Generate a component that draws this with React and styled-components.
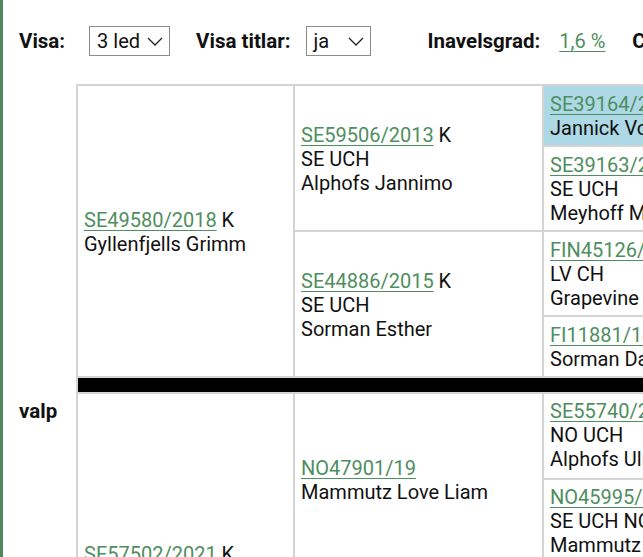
import React from 'react';
import styled, { createGlobalStyle } from 'styled-components';

const GlobalStyle = createGlobalStyle`
  html, body {
    margin: 0;
    padding: 0;
    overflow: hidden;
    background: #fff;
  }
  body {
    font-family: Roboto, 'Liberation Sans', sans-serif;
    color: #111;
  }
`;

const Page = styled.div`
  min-height: 100vh;
  border-left: 3px solid #4f8a5e;
  padding-top: 26px;
  box-sizing: border-box;
  overflow: hidden;
`;

const Toolbar = styled.div`
  display: flex;
  align-items: center;
  height: 30px;
  padding-left: 16px;
  margin-bottom: 28px;
  white-space: nowrap;
  font-size: 20px;

  & > * {
    flex-shrink: 0;
  }
`;

const Label = styled.span`
  font-weight: bold;
  font-size: 20.5px;
  margin-right: ${props => props.$space}px;
`;

const Select = styled.div`
  display: flex;
  align-items: center;
  justify-content: space-between;
  box-sizing: border-box;
  width: ${props => props.$width}px;
  height: 30px;
  padding: 0 6px 0 7px;
  border: 1px solid #8c8c8c;
  margin-right: ${props => props.$space}px;
  font-size: 20px;
`;

const Link = styled.a`
  color: #4e8e60;
  text-decoration: underline;
  text-underline-offset: 3px;
  text-decoration-thickness: 1px;
  margin-right: ${props => props.$space || 0}px;
`;

const Pedigree = styled.table`
  border-collapse: collapse;
  table-layout: fixed;
  width: 860px;
  font-size: 20px;
  line-height: 24px;
`;

const LabelCell = styled.td`
  padding: 0 0 0 16px;
  font-weight: bold;
  font-size: 20.5px;
  vertical-align: middle;
  border-right: 2px solid #d4d4d4;
`;

const Cell = styled.td`
  border: 2px solid #d4d4d4;
  padding: ${props => (props.$tall ? '5px 6px 7px' : '6px 6px 5px')};
  vertical-align: middle;
  white-space: nowrap;
  overflow: hidden;
  background: ${props => (props.$marked ? '#add8e6' : '#fff')};
`;

const Divider = styled.td`
  border: 2px solid #d4d4d4;
  background: #000;
  height: 14px;
  padding: 0;
`;

const Chevron = () => (
  <svg width="16" height="9" viewBox="0 0 16 9" fill="none">
    <polyline points="1,1 8,8 15,1" stroke="#222" strokeWidth="1.3" />
  </svg>
);

const Dog = ({ reg, sex, titles, name }) => (
  <>
    <Link>{reg}</Link>
    {sex && ` ${sex}`}
    {titles && <div>{titles}</div>}
    <div>{name}</div>
  </>
);

const top = {
  parent: { reg: 'SE49580/2018', sex: 'K', name: 'Gyllenfjells Grimm' },
  grand: [
    { reg: 'SE59506/2013', sex: 'K', titles: 'SE UCH', name: 'Alphofs Jannimo' },
    { reg: 'SE44886/2015', sex: 'K', titles: 'SE UCH', name: 'Sorman Esther' },
  ],
  great: [
    { reg: 'SE39164/2010', name: 'Jannick Vom Birkenhof', marked: true },
    { reg: 'SE39163/2010', titles: 'SE UCH', name: 'Meyhoff Mona' },
    { reg: 'FIN45126/12', titles: 'LV CH', name: 'Grapevine Dandy' },
    { reg: 'FI11881/14', name: 'Sorman Daisy' },
  ],
};

const bottom = {
  parent: { reg: 'SE57502/2021', sex: 'K', name: 'Mammutz Love Lina' },
  grand: [
    { reg: 'NO47901/19', name: 'Mammutz Love Liam' },
    { reg: 'SE21788/2017', sex: 'K', titles: 'SE UCH', name: 'Alphofs Ronja' },
  ],
  great: [
    { reg: 'SE55740/2014', titles: 'NO UCH', name: 'Alphofs Ulrik' },
    { reg: 'NO45995/15', titles: 'SE UCH NO UCH', name: 'Mammutz Bella' },
    { reg: 'SE39164/2010', titles: 'SE UCH', name: 'Jannick Vom Birkenhof' },
    { reg: 'SE30412/2012', titles: 'SE UCH', name: 'Alphofs Nelly' },
  ],
};

const Half = ({ data, tall, first }) => (
  <>
    <tr>
      {first && <LabelCell rowSpan={9}>valp</LabelCell>}
      <Cell rowSpan={4}>
        <Dog {...data.parent} />
      </Cell>
      <Cell rowSpan={2}>
        <Dog {...data.grand[0]} />
      </Cell>
      <Cell $marked={data.great[0].marked} $tall={tall}>
        <Dog {...data.great[0]} />
      </Cell>
    </tr>
    <tr>
      <Cell $tall={tall}>
        <Dog {...data.great[1]} />
      </Cell>
    </tr>
    <tr>
      <Cell rowSpan={2}>
        <Dog {...data.grand[1]} />
      </Cell>
      <Cell $tall={tall}>
        <Dog {...data.great[2]} />
      </Cell>
    </tr>
    <tr>
      <Cell $tall={tall}>
        <Dog {...data.great[3]} />
      </Cell>
    </tr>
  </>
);

export default function App() {
  return (
    <>
      <GlobalStyle />
      <Page>
        <Toolbar>
          <Label $space={24}>Visa:</Label>
          <Select $width={81} $space={26}>
            <span>3 led</span>
            <Chevron />
          </Select>
          <Label $space={15}>Visa titlar:</Label>
          <Select $width={65} $space={57}>
            <span>ja</span>
            <Chevron />
          </Select>
          <Label $space={19}>Inavelsgrad:</Label>
          <Link $space={27}>1,6 %</Link>
          <Label $space={0}>COI:</Label>
        </Toolbar>
        <Pedigree>
          <colgroup>
            <col style={{ width: 74 }} />
            <col style={{ width: 217 }} />
            <col style={{ width: 249 }} />
            <col style={{ width: 320 }} />
          </colgroup>
          <tbody>
            <Half data={top} first />
            <tr>
              <Divider colSpan={3} />
            </tr>
            <Half data={bottom} tall />
          </tbody>
        </Pedigree>
      </Page>
    </>
  );
}
